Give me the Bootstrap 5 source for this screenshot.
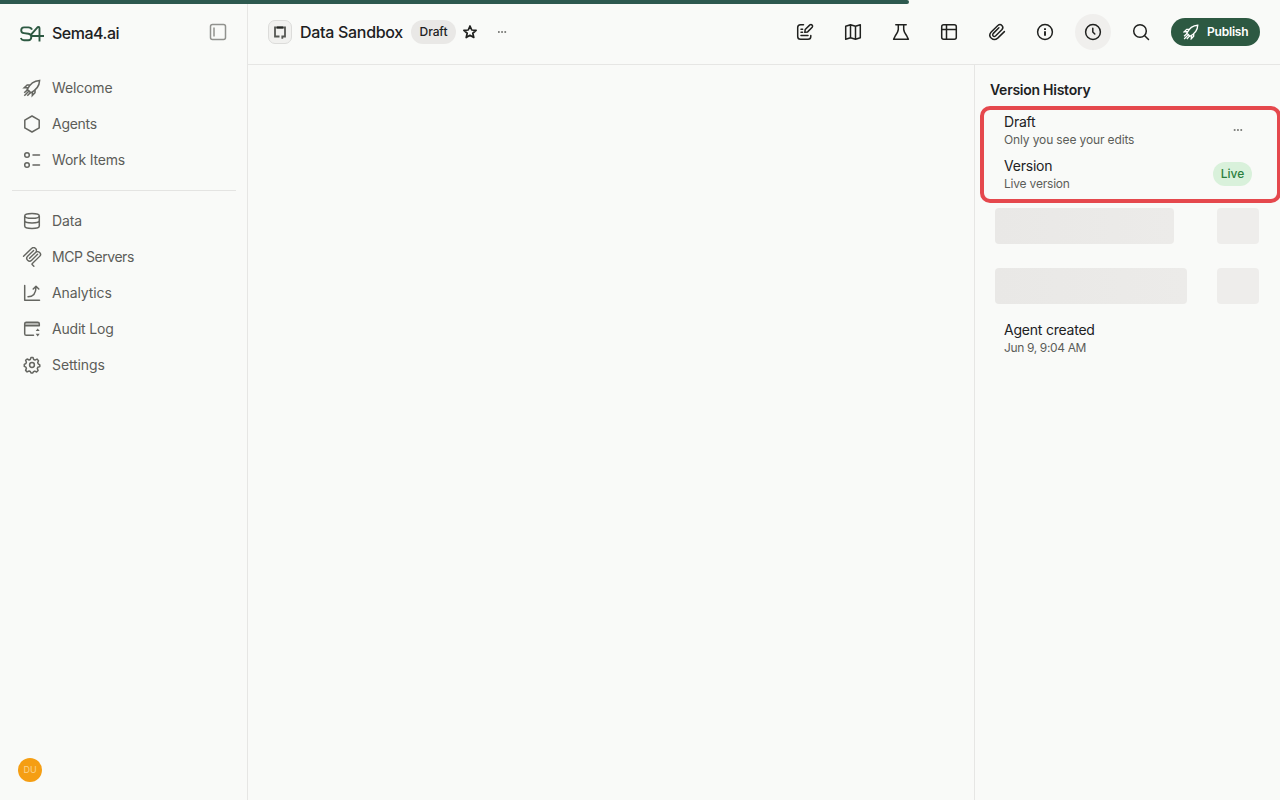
<!DOCTYPE html>
<html lang="en">
<head>
<meta charset="utf-8">
<meta name="viewport" content="width=device-width, initial-scale=1">
<title>Data Sandbox</title>
<link href="https://cdn.jsdelivr.net/npm/bootstrap@5.3.0/dist/css/bootstrap.min.css" rel="stylesheet">
<style>
  body { font-family: Inter, "Liberation Sans", sans-serif; font-size: 14px; color: #20211f; background: #f9faf8; }
  svg { flex: none; fill: none; stroke: currentColor; stroke-width: 1.5; display: block; }
  .loader { height: 4px; width: 909px; background: #2d594f; border-radius: 0 2px 2px 0; z-index: 5; }
  .side { width: 248px; border-right: 1px solid #e6e6e4; }
  .brand-row { height: 64px; padding: 2px 20px 0; }
  .brand-name { font-size: 16px; font-weight: 500; letter-spacing: -.48px; margin-left: 8px; }
  .side-link { height: 36px; padding: 0 22px; gap: 10px; color: #5c5d59; text-decoration: none; line-height: 36px; }
  .side-link svg { color: #656661; }
  .side-rule { height: 1px; background: #e4e4e2; margin: 12px 11px 12px 12px; }
  .avatar { width: 24px; height: 24px; background: #f59e13; color: #fbd48d; font-size: 9px; margin: 0 0 18px 18px; }
  .top { height: 65px; border-bottom: 1px solid #e6e6e4; padding: 0 20px; }
  .agent-icon { width: 24px; height: 24px; border: 1px solid #dcdcda; border-radius: 7px; background: #f1f1ef; }
  .title { font-size: 16px; font-weight: 500; margin-left: 8px; width: 111px; white-space: nowrap; letter-spacing: -.3px; }
  .pill { font-size: 12px; font-weight: 500; height: 24px; border-radius: 12px; background: #e9e8e6; }
  .tool { width: 36px; height: 36px; border-radius: 50%; margin-right: 12px; border: 0; background: none; color: #20211f; padding: 0; }
  .tool.on { background: #f0efed; }
  .publish { width: 89px; height: 28px; border-radius: 14px; background: #2d5942; color: #fff; font-size: 12px; font-weight: 600; letter-spacing: -.2px; border: 0; padding: 0 0 0 12px; gap: 8px; }
  .history { width: 306px; border-left: 1px solid #e6e6e4; }
  .history h2 { font-size: 14px; font-weight: 600; line-height: 20px; margin: 15px 0 6px 15px; letter-spacing: -.26px; }
  .marked { border: 4px solid #e5484d; border-radius: 10px; width: 301px; height: 97px; margin-left: 5px; padding: 2px 25px 0 20px; }
  .entry { height: 44px; }
  .name { line-height: 20px; font-size: 14px; letter-spacing: -.22px; }
  .note { line-height: 15px; font-size: 12px; color: #5c5d59; letter-spacing: -.13px; }
  .live { width: 39px; background: #d9f1db; color: #2b7f3e; }
  .bone-row { height: 36px; padding: 0 21px 0 20px; }
  .bone { height: 36px; border-radius: 4px; background: linear-gradient(90deg, #e9e8e6, #ecebe9); }
  .bone.end { width: 42px; background: #eeedeb; }
  .dots { fill: #5c5d59; stroke: none; }
</style>
</head>
<body class="vh-100 overflow-hidden">
<svg width="0" height="0" class="position-absolute">
  <symbol id="rocket" viewBox="0 0 20 20">
    <path d="M7 12.900 5.200 11.400 Q9.400 2.800 17.600 2.400 Q17.300 10.500 8.700 14.800Z M6.200 9.500 2.300 9.700 5.200 7 8 6.900 M10.500 13.800 10.300 17.600 13 14.800 13.100 11.900 M5.200 12.100 2.200 14.700 M6.500 13.500 2.300 17.800 M8 14.900 5.300 17.800"/>
  </symbol>
</svg>
<div class="loader position-fixed top-0 start-0"></div>
<div class="d-flex h-100">
  <aside class="side d-flex flex-column flex-shrink-0">
    <div class="brand-row d-flex align-items-center mb-2">
      <svg width="24" height="18" viewBox="0 0 24 18" style="color:#2d5942;margin-top:2px"><path stroke-width="1.900" stroke-linejoin="round" d="M12 4.700Q11 2.400 8.500 2.400H4Q1.200 2.400 1.200 5.200 1.200 7.900 4 8.100L8.500 8.700Q11.300 9.200 11.300 12 11.300 15.200 8.300 15.200H4Q1.600 15.200 .8 13 M19.500 16.400V3.500Q19.400 1.400 17.700 2.200L11.500 9.200Q10.800 11 13 11H24"/></svg>
      <span class="brand-name">Sema4.ai</span>
      <svg class="ms-auto" width="18" height="18" viewBox="0 0 18 18" style="color:#91928e;margin-top:-3px"><rect x="1.500" y="1.500" width="15" height="15" rx="2"/><path d="M5 4.500v9"/></svg>
    </div>
    <nav>
      <a class="side-link d-flex align-items-center" style="margin-top:-2px"><svg width="20" height="20"><use href="#rocket"/></svg><span style="letter-spacing:-.14px">Welcome</span></a>
      <a class="side-link d-flex align-items-center"><svg width="20" height="20"><path stroke-linejoin="round" d="m10 2 7.200 4.100v7.800L10 18l-7.200-4.100V6.100z"/></svg><span style="letter-spacing:-.27px">Agents</span></a>
      <a class="side-link d-flex align-items-center"><svg width="20" height="20"><circle cx="5" cy="5" r="2.300"/><circle cx="5" cy="15" r="2.300"/><path stroke-linecap="round" d="M11 5h6.500M11 15h6.500"/></svg><span style="letter-spacing:-.18px">Work Items</span></a>
      <div class="side-rule"></div>
      <a class="side-link d-flex align-items-center"><svg width="20" height="20"><ellipse cx="10" cy="4.900" rx="7.300" ry="2.400"/><path d="M2.700 5v10c0 3.300 14.600 3.300 14.600 0V5M2.700 9.500c0 3.300 14.600 3.300 14.600 0"/></svg><span style="letter-spacing:-.1px">Data</span></a>
      <a class="side-link d-flex align-items-center"><svg width="20" height="20" viewBox="0 0 24 24" style="fill:currentColor;stroke:none"><path d="M15.688 2.343a2.588 2.588 0 00-3.610 0l-9.626 9.440a.863.863 0 01-1.203 0 .823.823 0 010-1.180l9.626-9.440a4.313 4.313 0 016.016 0 4.116 4.116 0 011.204 3.540 4.300 4.300 0 013.609 1.180l.05.05a4.115 4.115 0 010 5.900l-8.706 8.537a.274.274 0 000 .393l1.788 1.754a.823.823 0 010 1.180.863.863 0 01-1.203 0l-1.788-1.753a1.920 1.920 0 010-2.754l8.706-8.538a2.470 2.470 0 000-3.540l-.05-.049a2.588 2.588 0 00-3.607-.003l-7.172 7.034-.1.099a.863.863 0 01-1.204 0 .823.823 0 010-1.180l7.273-7.133a2.470 2.470 0 00-.003-3.537z"/><path d="M14.485 4.703a.823.823 0 000-1.180.863.863 0 00-1.204 0l-7.119 6.982a4.115 4.115 0 000 5.900 4.314 4.314 0 006.016 0l7.120-6.982a.823.823 0 000-1.180.863.863 0 00-1.204 0l-7.119 6.982a2.588 2.588 0 01-3.610 0 2.470 2.470 0 010-3.540l7.120-6.982z"/></svg><span style="letter-spacing:-.45px">MCP Servers</span></a>
      <a class="side-link d-flex align-items-center"><svg width="20" height="20"><path stroke-linecap="round" stroke-linejoin="round" d="M2.700 2.500v14.800h14.800M6 13.800c5 0 8-3 8-10M11.200 6 14 3.200 16.800 6"/></svg><span style="letter-spacing:-.1px">Analytics</span></a>
      <a class="side-link d-flex align-items-center"><svg width="20" height="20"><path fill="#b5b6b2" stroke="none" d="M3 3.500h14v3H3z"/><path stroke-linecap="round" d="M11.500 16.300H4.300q-1.600 0-1.600-1.600V4.800q0-1.600 1.600-1.600h11.400q1.600 0 1.600 1.600v2M3 6.700h14"/><path fill="currentColor" stroke="none" d="m13.700 12 2-2.600 2 2.600zM13.700 14.800l2 2.600 2-2.600z"/></svg><span style="letter-spacing:-.2px">Audit Log</span></a>
      <a class="side-link d-flex align-items-center"><svg width="20" height="20"><path stroke-linejoin="round" d="M8.300 4.500 9 2.500h2l.7 2 1.300.6 2-1 1.500 1.600-.8 1.900.5 1.200 1.600 1v1.800l-2 .7-.5 1.200.8 2-1.500 1.500-1.800-.9-1.300.6-.7 1.300H9l-.7-1.500-1.200-.5-2 .9-1.500-1.500.8-2-.5-1.200-1.600-.8V9.300l1.600-.8.5-1.200-.8-2L5.100 4l2 1z"/><circle cx="10" cy="10" r="2.400"/></svg><span style="letter-spacing:-.1px">Settings</span></a>
    </nav>
    <div class="avatar rounded-circle d-flex align-items-center justify-content-center mt-auto">DU</div>
  </aside>
  <div class="flex-grow-1 d-flex flex-column">
    <header class="top d-flex align-items-center flex-shrink-0">
      <span class="agent-icon d-flex align-items-center justify-content-center"><svg width="14" height="14" viewBox="0 0 14 14"><path stroke="#555753" stroke-width="1.800" d="M6.500 11.500H2V2.500h10v9H9.300v2.300"/><path stroke="#252724" stroke-width="2" d="M4 2.500h6"/></svg></span>
      <span class="title">Data Sandbox</span>
      <span class="pill d-flex align-items-center justify-content-center" style="width:45px"><span style="letter-spacing:-.1px">Draft</span></span>
      <svg width="16" height="16" viewBox="0 0 16 16" style="margin-left:6px"><path stroke-width="1.700" stroke-linejoin="round" d="m8 2 1.750 4 4.350.4-3.300 2.850 1 4.250L8 11.250 4.200 13.500l1-4.250L1.900 6.400 6.250 6z"/></svg>
      <svg class="dots" width="12" height="4" viewBox="0 0 12 4" style="margin-left:18px"><path d="M2 1.200h1.700v1.600H2zM5.200 1.200h1.700v1.600H5.200zM8.400 1.200h1.700v1.600H8.400z"/></svg>
      <div class="d-flex align-items-center ms-auto">
        <button class="tool d-flex align-items-center justify-content-center" aria-label="Edit"><svg width="20" height="20"><path stroke-linecap="round" d="M8.500 2.700H5.500q-2.800 0-2.800 2.800v9q0 2.800 2.800 2.800h7.500q2.800 0 2.800-2.800v-1M6 7.300h1.600M6 10.300h1.600M6 13.500h7"/><path stroke-linejoin="round" d="m9.800 10.300.4-2.800 4.700-4.600q1.200-.8 2.200.2 1 1 .1 2.200l-4.600 4.600z"/></svg></button>
        <button class="tool d-flex align-items-center justify-content-center" aria-label="Map"><svg width="20" height="20"><path stroke-linejoin="round" d="m2.700 4.300 4.800-1.500 5 1.500 4.800-1.500v12.900l-4.800 1.500-5-1.500-4.800 1.500zM7.500 2.800v12.900M12.500 4.300v12.900"/></svg></button>
        <button class="tool d-flex align-items-center justify-content-center" aria-label="Test"><svg width="20" height="20"><path stroke-linecap="round" stroke-linejoin="round" d="M4.800 2.700h10.400M7.300 2.700v4.600Q7.200 9.800 4.200 14L2.600 17.300h14.800L15.800 14Q12.800 9.800 12.700 7.300V2.700"/></svg></button>
        <button class="tool d-flex align-items-center justify-content-center" aria-label="Table"><svg width="20" height="20"><rect x="2.700" y="2.700" width="14.600" height="14.600" rx="2"/><path d="M2.700 7.500h14.600M7.500 2.700v14.600"/></svg></button>
        <button class="tool d-flex align-items-center justify-content-center" aria-label="Attach"><svg width="20" height="20"><path stroke-linecap="round" d="m17.400 9.600-6.700 6.500c-4.400 3.800-10.300-1.400-6.700-5.800l6.800-6.800c3-2.400 6.600 1 4.200 4l-6.500 6.500c-1.800 1.300-3.700-.6-2.400-2.400l5.800-5.800"/></svg></button>
        <button class="tool d-flex align-items-center justify-content-center" aria-label="Info"><svg width="20" height="20"><circle cx="10" cy="10" r="7.400"/><path stroke-width="1.900" d="M10 9.300v4.400M10 6.200v1.700"/></svg></button>
        <button class="tool on d-flex align-items-center justify-content-center" aria-label="History"><svg width="20" height="20"><circle cx="10" cy="10" r="7.400"/><path stroke-linecap="round" d="M9.800 6.300V10l2 2"/></svg></button>
        <button class="tool d-flex align-items-center justify-content-center" aria-label="Search"><svg width="20" height="20"><circle cx="9" cy="9" r="6.300"/><path stroke-linecap="round" d="m13.700 13.700 3.800 3.800"/></svg></button>
        <button class="publish d-flex align-items-center"><svg width="16" height="16" viewBox="1 1 18 18" stroke-width="1.700"><use href="#rocket" width="20" height="20"/></svg><span>Publish</span></button>
      </div>
    </header>
    <div class="d-flex flex-grow-1">
      <main class="flex-grow-1"></main>
      <section class="history flex-shrink-0">
        <h2>Version History</h2>
        <div class="marked">
          <div class="entry d-flex justify-content-between">
            <div><div class="name">Draft</div><div class="note">Only you see your edits</div></div>
            <svg class="dots" width="12" height="4" viewBox="0 0 12 4" style="margin:16px 8px 0 0"><path d="M1.800 1.200h1.700v1.600H1.800zM5.100 1.200h1.700v1.600H5.100zM8.400 1.200h1.700v1.600H8.400z"/></svg>
          </div>
          <div class="entry d-flex justify-content-between">
            <div><div class="name">Version</div><div class="note" style="letter-spacing:-.2px">Live version</div></div>
            <div class="pill live d-flex align-items-center justify-content-center" style="margin-top:6px">Live</div>
          </div>
        </div>
        <div class="bone-row d-flex justify-content-between" style="margin-top:5px"><div class="bone" style="width:179px"></div><div class="bone end"></div></div>
        <div class="bone-row d-flex justify-content-between" style="margin-top:24px"><div class="bone" style="width:192px"></div><div class="bone end"></div></div>
        <div style="margin:16px 0 0 29px"><div class="name">Agent created</div><div class="note" style="letter-spacing:-.36px">Jun 9, 9:04 AM</div></div>
      </section>
    </div>
  </div>
</div>
<script src="https://cdn.jsdelivr.net/npm/bootstrap@5.3.0/dist/js/bootstrap.bundle.min.js"></script>
</body>
</html>
